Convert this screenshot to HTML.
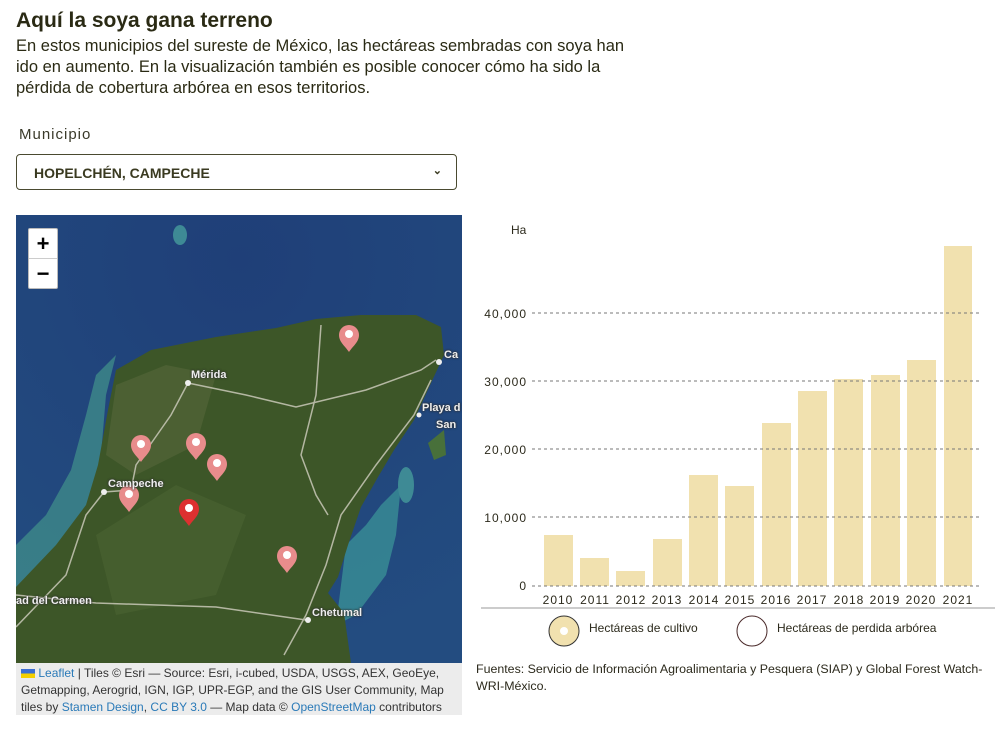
<!DOCTYPE html>
<html><head><meta charset="utf-8"><style>
*{margin:0;padding:0;box-sizing:border-box}
body{width:1004px;height:732px;background:#fff;font-family:"Liberation Sans",sans-serif;color:#2c2a1c;position:relative;overflow:hidden}
.abs{position:absolute}
h1{position:absolute;left:16px;top:9px;font-size:21px;font-weight:bold;color:#2a2a14}
.intro{left:16px;top:36px;font-size:16.5px;line-height:21px;width:630px;color:#2a2a14}
.lab{left:19px;top:126px;font-size:15px;letter-spacing:1px;color:#3a3a2a}
.sel{left:16px;top:154px;width:441px;height:36px;border:1px solid #4a4a30;border-radius:4px;font-size:14px;font-weight:bold;padding:10px 0 0 17px;color:#3a3a20}
.map{left:16px;top:215px;width:446px;height:500px;overflow:hidden}
.attr{left:0;top:448px;width:446px;height:52px;background:rgba(235,235,235,.95);font-size:12px;line-height:17px;padding:2px 5px;color:#333}
.attr a{color:#2a7ab8;text-decoration:none}
.zb{left:12px;top:13px;width:30px;height:61px;background:#fff;border-radius:2px;border:1px solid #bbb}
.zb div{height:30px;text-align:center;font-size:22px;line-height:29px;font-weight:bold;color:#000}
.city{font-size:11px;font-weight:bold;color:#eee;text-shadow:0 0 2px #333,0 0 2px #333}
</style></head><body>
<h1>Aquí la soya gana terreno</h1>
<div class="abs intro">En estos municipios del sureste de México, las hectáreas sembradas con soya han ido en aumento. En la visualización también es posible conocer cómo ha sido la pérdida de cobertura arbórea en esos territorios.</div>
<div class="abs lab">Municipio</div>
<div class="abs sel">HOPELCHÉN, CAMPECHE<span style="position:absolute;right:14px;top:9px;font-size:11px">&#8964;</span></div>

<div class="abs map">
<svg width="446" height="448" viewBox="0 0 446 448">
<defs><radialGradient id="o" cx="0.5" cy="0.1" r="0.9"><stop offset="0" stop-color="#1f3f78"/><stop offset="1" stop-color="#234c80"/></radialGradient></defs>
<rect width="446" height="448" fill="url(#o)"/>
<path d="M0,330 L30,300 L55,255 L70,200 L80,160 L100,140 L90,180 L85,240 L70,300 L40,350 L0,380Z" fill="#3e8a8a" opacity=".8"/>
<path d="M330,330 L350,310 L365,290 L385,270 L380,320 L370,360 L340,400 L320,410Z" fill="#3a8f96" opacity=".8"/>
<path d="M0,372 L40,330 L70,290 L82,250 L92,195 L100,155 L135,135 L200,122 L260,113 L300,104 L345,100 L400,100 L425,112 L428,140 L415,168 L398,205 L378,235 L362,262 L345,292 L332,330 L322,362 L312,378 L328,398 L335,448 L0,448Z" fill="#3d5628"/>
<path d="M100,170 L150,150 L200,160 L180,230 L120,260 L90,240Z" fill="#56683a" opacity=".6"/>
<path d="M80,320 L160,270 L230,300 L200,380 L100,400Z" fill="#4e6634" opacity=".5"/>
<ellipse cx="164" cy="20" rx="7" ry="10" fill="#3e8a95"/>
<ellipse cx="390" cy="270" rx="8" ry="18" fill="#3e8a95"/>
<path d="M412,228 L428,215 L430,240 L418,245Z" fill="#48703a"/>
<g fill="none" stroke="#c9c9b8" stroke-width="1.5" opacity=".85">
<path d="M172,168 L230,180 L280,192 L350,175 L405,155 L420,145"/>
<path d="M172,168 L155,200 L120,250 L115,275 L88,277 L70,300 L50,360 L0,412"/>
<path d="M415,165 L398,200 L360,250 L325,300 L310,350 L290,400 L268,440"/>
<path d="M0,380 L80,388 L200,392 L290,405"/>
<path d="M305,110 L300,180 L285,240 L300,280 L312,300"/>
</g>
<circle cx="172" cy="168" r="3" fill="#eee"/><circle cx="88" cy="277" r="3" fill="#eee"/><circle cx="292" cy="405" r="3" fill="#eee"/><circle cx="423" cy="147" r="3" fill="#eee"/><circle cx="403" cy="200" r="2.5" fill="#eee"/>
<g>
<g transform="translate(333,123)"><path d="M0,14 C-4,8 -10,4 -10,-3 A10,10 0 0 1 10,-3 C10,4 4,8 0,14Z" fill="#e88c8c"/><circle cy="-4" r="4" fill="#fff"/></g>
<g transform="translate(125,233)"><path d="M0,14 C-4,8 -10,4 -10,-3 A10,10 0 0 1 10,-3 C10,4 4,8 0,14Z" fill="#e88c8c"/><circle cy="-4" r="4" fill="#fff"/></g>
<g transform="translate(180,231)"><path d="M0,14 C-4,8 -10,4 -10,-3 A10,10 0 0 1 10,-3 C10,4 4,8 0,14Z" fill="#e88c8c"/><circle cy="-4" r="4" fill="#fff"/></g>
<g transform="translate(201,252)"><path d="M0,14 C-4,8 -10,4 -10,-3 A10,10 0 0 1 10,-3 C10,4 4,8 0,14Z" fill="#e88c8c"/><circle cy="-4" r="4" fill="#fff"/></g>
<g transform="translate(113,283)"><path d="M0,14 C-4,8 -10,4 -10,-3 A10,10 0 0 1 10,-3 C10,4 4,8 0,14Z" fill="#e88c8c"/><circle cy="-4" r="4" fill="#fff"/></g>
<g transform="translate(173,297)"><path d="M0,14 C-4,8 -10,4 -10,-3 A10,10 0 0 1 10,-3 C10,4 4,8 0,14Z" fill="#dd3030"/><circle cy="-4" r="4" fill="#fff"/></g>
<g transform="translate(271,344)"><path d="M0,14 C-4,8 -10,4 -10,-3 A10,10 0 0 1 10,-3 C10,4 4,8 0,14Z" fill="#e88c8c"/><circle cy="-4" r="4" fill="#fff"/></g>
</g>
</svg>
<div class="abs city" style="left:175px;top:154px">Mérida</div>
<div class="abs city" style="left:92px;top:263px">Campeche</div>
<div class="abs city" style="left:0;top:380px">ad del Carmen</div>
<div class="abs city" style="left:296px;top:392px">Chetumal</div>
<div class="abs city" style="left:406px;top:187px">Playa d</div>
<div class="abs city" style="left:420px;top:204px">San</div>
<div class="abs city" style="left:428px;top:134px">Ca</div>
<div class="abs zb"><div style="border-bottom:1px solid #ccc">+</div><div>−</div></div>
<div class="abs attr"><span style="display:inline-block;width:14px;height:9px;background:linear-gradient(#3b6fd4 50%,#f5d000 50%);vertical-align:middle"></span> <a>Leaflet</a> | Tiles © Esri — Source: Esri, i-cubed, USDA, USGS, AEX, GeoEye, Getmapping, Aerogrid, IGN, IGP, UPR-EGP, and the GIS User Community, Map tiles by <a>Stamen Design</a>, <a>CC BY 3.0</a> — Map data © <a>OpenStreetMap</a> contributors</div>
</div>

<svg class="abs" style="left:0;top:0" width="1004" height="732">
<g font-family="Liberation Sans" font-size="12" fill="#2c2a1c">
<text x="511" y="234">Ha</text>
<g text-anchor="end" letter-spacing="1">
<text x="527" y="590">0</text><text x="527" y="522">10,000</text><text x="527" y="454">20,000</text><text x="527" y="386">30,000</text><text x="527" y="318">40,000</text>
</g>
<g fill="#f1e1af">
<rect x="544" y="535" width="29" height="51"/><rect x="580" y="558" width="29" height="28"/><rect x="616" y="571" width="29" height="15"/><rect x="653" y="539" width="29" height="47"/><rect x="689" y="475" width="29" height="111"/><rect x="725" y="486" width="29" height="100"/><rect x="762" y="423" width="29" height="163"/><rect x="798" y="391" width="29" height="195"/><rect x="834" y="379" width="29" height="207"/><rect x="871" y="375" width="29" height="211"/><rect x="907" y="360" width="29" height="226"/><rect x="944" y="246" width="28" height="340"/>
</g>
<g stroke="#777" stroke-dasharray="3,3" stroke-width="1">
<line x1="532" y1="586" x2="980" y2="586"/><line x1="532" y1="517" x2="980" y2="517"/><line x1="532" y1="449" x2="980" y2="449"/><line x1="532" y1="381" x2="980" y2="381"/><line x1="532" y1="313" x2="980" y2="313"/>
</g>
<g text-anchor="middle" letter-spacing="1">
<text x="558" y="604">2010</text><text x="595" y="604">2011</text><text x="631" y="604">2012</text><text x="667" y="604">2013</text><text x="704" y="604">2014</text><text x="740" y="604">2015</text><text x="776" y="604">2016</text><text x="812" y="604">2017</text><text x="849" y="604">2018</text><text x="885" y="604">2019</text><text x="921" y="604">2020</text><text x="958" y="604">2021</text>
</g>
<line x1="481" y1="608" x2="995" y2="608" stroke="#ccc" stroke-width="2"/>
<circle cx="564" cy="631" r="15" fill="#f1e1af" stroke="#333" stroke-width="1"/><circle cx="564" cy="631" r="4" fill="#fff"/>
<circle cx="752" cy="631" r="15" fill="#fff" stroke="#4a2a2a" stroke-width="1"/>
<text x="589" y="632" font-size="12">Hectáreas de cultivo</text>
<text x="777" y="632" font-size="12">Hectáreas de perdida arbórea</text>
<text x="476" y="673" font-size="12.4">Fuentes: Servicio de Información Agroalimentaria y Pesquera (SIAP) y Global Forest Watch-</text>
<text x="476" y="690" font-size="12.4">WRI-México.</text>
</g>
</svg>
</body></html>
